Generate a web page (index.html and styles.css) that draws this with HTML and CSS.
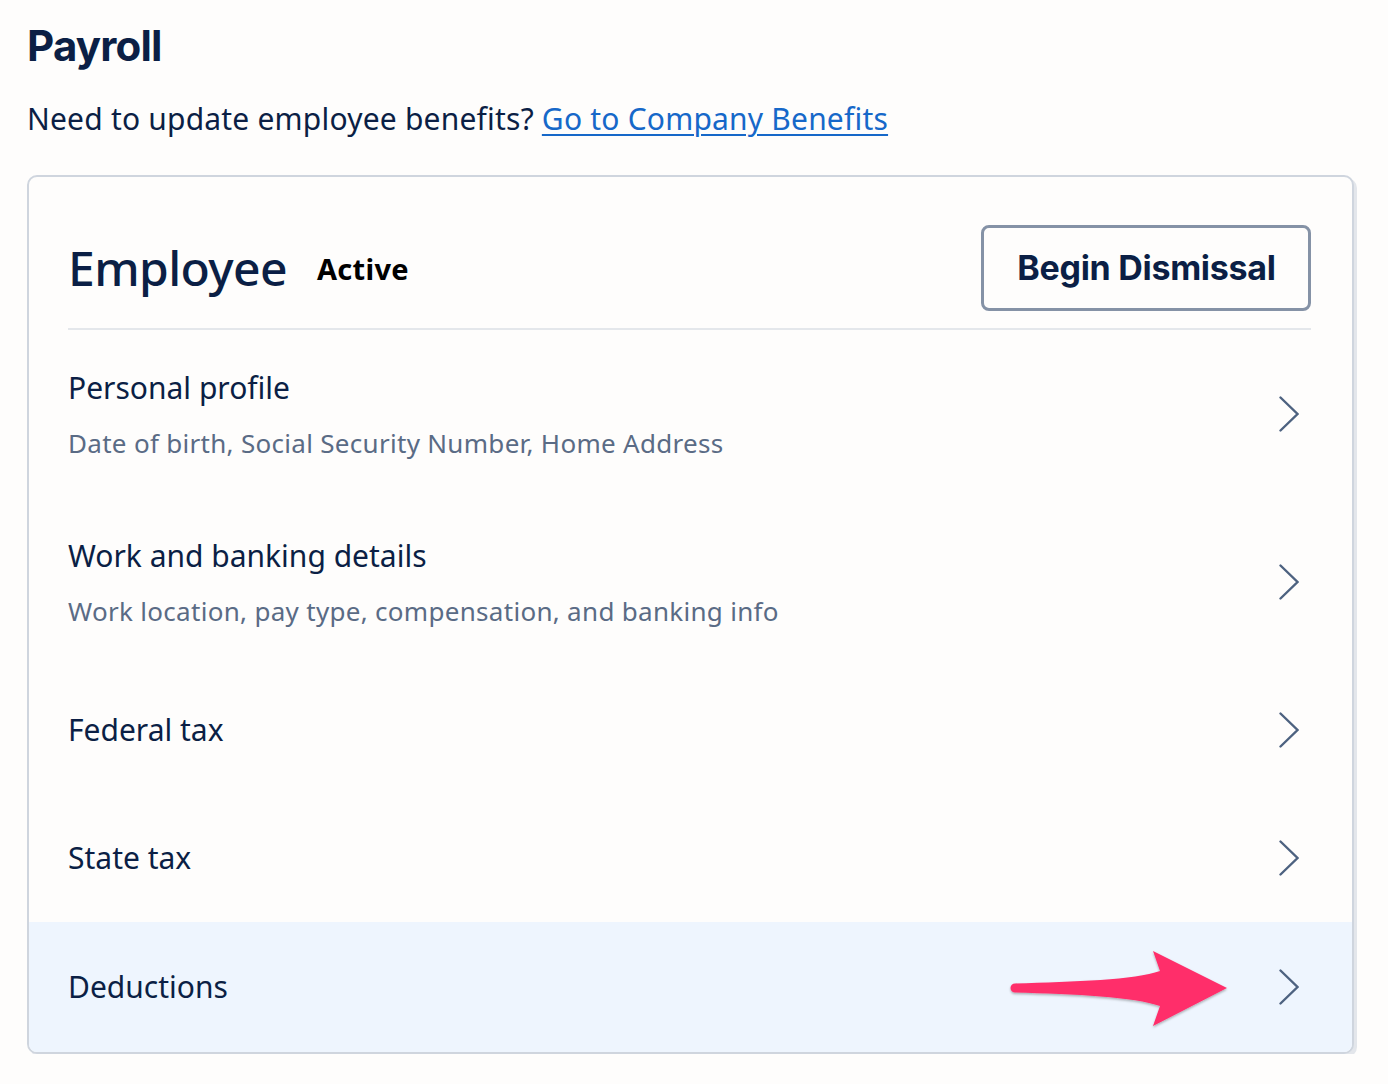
FILE: index.html
```html
<!DOCTYPE html>
<html lang="en">
<head>
  <meta charset="UTF-8">
  <title>Payroll</title>
  <link rel="stylesheet" href="styles.css">
</head>
<body>
  <h1 class="page-title">Payroll</h1>

  <p class="intro">Need to update employee benefits? <a href="#">Go to Company Benefits</a></p>

  <!-- Employee card -->
  <div class="card">
    <div class="card-header">
      <div class="card-title">
        <h2>Employee</h2>
        <span class="status">Active</span>
      </div>
      <button class="btn-outline">Begin Dismissal</button>
    </div>

    <ul class="rows">
      <li class="row row-tall">
        <div class="row-text">
          <div class="row-title">Personal profile</div>
          <div class="row-sub">Date of birth, Social Security Number, Home Address</div>
        </div>
        <svg class="chevron" viewBox="0 0 20 36"><polyline points="1.5,1.5 18.5,18 1.5,34.5"/></svg>
      </li>
      <li class="row row-tall">
        <div class="row-text">
          <div class="row-title">Work and banking details</div>
          <div class="row-sub">Work location, pay type, compensation, and banking info</div>
        </div>
        <svg class="chevron" viewBox="0 0 20 36"><polyline points="1.5,1.5 18.5,18 1.5,34.5"/></svg>
      </li>
      <li class="row">
        <div class="row-text">
          <div class="row-title">Federal tax</div>
        </div>
        <svg class="chevron" viewBox="0 0 20 36"><polyline points="1.5,1.5 18.5,18 1.5,34.5"/></svg>
      </li>
      <li class="row">
        <div class="row-text">
          <div class="row-title">State tax</div>
        </div>
        <svg class="chevron" viewBox="0 0 20 36"><polyline points="1.5,1.5 18.5,18 1.5,34.5"/></svg>
      </li>
      <li class="row row-active">
        <div class="row-text">
          <div class="row-title">Deductions</div>
        </div>
        <!-- annotation arrow -->
        <svg class="pointer" viewBox="0 0 230 90">
          <defs>
            <filter id="arrowShadow" x="-10%" y="-20%" width="120%" height="140%">
              <feDropShadow dx="0" dy="1.5" stdDeviation="1" flood-color="#000" flood-opacity="0.3"/>
            </filter>
          </defs>
          <path d="M10,39.5 C70,37.5 130,36 155,27 L148,7 L222,44 L148,82 L155,62 C130,53 70,50 10,48.5 A4.5,4.5 0 0 1 10,39.5 Z" fill="#ff2d6b" filter="url(#arrowShadow)"/>
        </svg>
        <svg class="chevron" viewBox="0 0 20 36"><polyline points="1.5,1.5 18.5,18 1.5,34.5"/></svg>
      </li>
    </ul>
  </div>
</body>
</html>
```

FILE: styles.css
```css
/* Base */
body {
  margin: 0;
  padding: 0 34px 0 27px;
  background-color: #fefdfc;
  color: #0b1f45;
  font-family: "Noto Sans", Arial, sans-serif;
}

.page-title {
  margin: 20px 0 0;
  font-family: Inter, Arial, sans-serif;
  font-size: 42px;
  font-weight: 700;
  line-height: 52px;
  letter-spacing: -0.8px;
}

.intro {
  margin: 27px 0 0;
  font-size: 30px;
  line-height: 40px;
  letter-spacing: 0.2px;
}

.intro a {
  color: #1668c9;
  text-decoration-thickness: 2px;
  text-underline-offset: 4px;
}

/* Card */
.card {
  margin-top: 36px;
  border: 2px solid #cfd5de;
  border-radius: 10px;
  box-shadow: 3px 3px 0 #e3e6eb;
  background-color: #fefdfc;
  overflow: hidden;
}

.card-header {
  display: flex;
  align-items: center;
  justify-content: space-between;
  margin: 0 41px 0 39px;
  padding: 48px 0 17px;
  border-bottom: 2px solid #e4e7eb;
}

.card-title {
  display: flex;
  align-items: center;
  gap: 30px;
}

.card-title h2 {
  margin: 0;
  font-size: 48px;
  font-weight: 500;
  line-height: 56px;
  letter-spacing: -0.6px;
}

.status {
  font-family: "Noto Sans", Arial, sans-serif;
  font-size: 29px;
  font-weight: 700;
  color: #000;
  letter-spacing: 0.3px;
}

.btn-outline {
  height: 86px;
  width: 330px;
  padding: 0 0 0 1px;
  border: 3px solid #8592a6;
  border-radius: 8px;
  background: #fefdfc;
  color: #0b1f45;
  font-family: Inter, Arial, sans-serif;
  font-size: 34px;
  font-weight: 700;
  letter-spacing: -0.3px;
  line-height: 1.2;
  cursor: pointer;
}

/* List rows */
.rows {
  list-style: none;
  margin: 0;
  padding: 0;
}

.row {
  position: relative;
  display: flex;
  align-items: center;
  justify-content: space-between;
  height: 128px;
  padding: 0 53px 0 39px;
}

.row-tall {
  height: 168px;
}

.row-active {
  height: 130px;
  background-color: #eef5fe;
}

.row-title {
  font-size: 30px;
  line-height: 40px;
}

.row-sub {
  margin-top: 17px;
  font-size: 26px;
  line-height: 36px;
  letter-spacing: 0.3px;
  color: #5a6b85;
}

.chevron {
  width: 20px;
  height: 36px;
  fill: none;
  stroke: #4d6280;
  stroke-width: 2.4;
  stroke-linecap: round;
  stroke-linejoin: miter;
}

/* Annotation arrow */
.pointer {
  position: absolute;
  left: 976px;
  top: 22px;
  width: 230px;
  height: 90px;
}
```
